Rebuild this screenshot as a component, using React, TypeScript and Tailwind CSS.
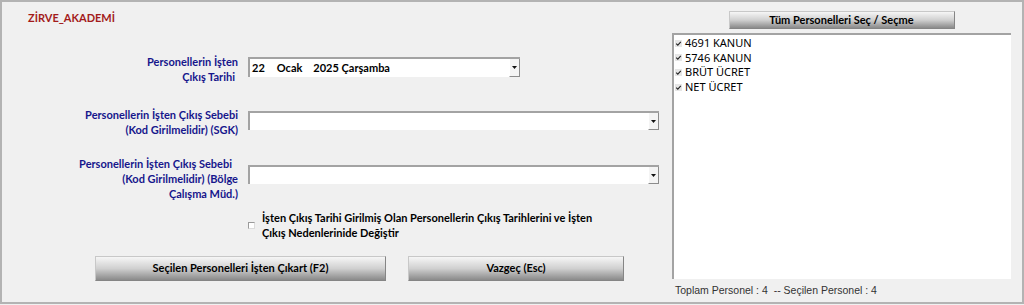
import React from 'react';

const labelFont = { fontFamily: 'Lato, "Noto Sans", sans-serif' };

const Combo = ({ width, height, children, className = '' }: { width: string; height: string; children?: React.ReactNode; className?: string }) => (
  <div className={`flex bg-white border-t-2 border-l-2 border-[#a3a3a3] ${width} ${height} ${className}`}>
    <div className="flex-1 flex items-center pl-[2px] text-[11px] font-bold text-black whitespace-pre" style={labelFont}>
      {children}
    </div>
    {/* dropdown arrow button */}
    <div className="w-[11px] h-full bg-[#f4f4f4] border-l border-white border-r border-r-[#8c8c8c] border-b border-b-[#8c8c8c] flex items-center justify-center">
      <svg width="5" height="3" viewBox="0 0 5 3">
        <path d="M0 0h5L2.5 3z" fill="#111" />
      </svg>
    </div>
  </div>
);

const GrayButton = ({ children, className = '' }: { children: React.ReactNode; className?: string }) => (
  <button
    className={`bg-linear-to-b from-[#f6f6f6] via-[#d0d0d0] to-[#8a8a8a] border border-[#858585] border-t-[#c8c8c8] border-l-[#c8c8c8] text-[11px] font-bold text-black flex items-center justify-center ${className}`}
    style={labelFont}
  >
    {children}
  </button>
);

const CheckMark = () => (
  <svg width="7" height="7" viewBox="0 0 7 7" className="shrink-0">
    <rect x="0" y="0" width="7" height="7" fill="#e6e6e6" />
    <path d="M1.2 3.6 L2.8 5.2 L5.8 1.8" stroke="#222" strokeWidth="1.1" fill="none" />
  </svg>
);

const items = ['4691 KANUN', '5746 KANUN', 'BRÜT ÜCRET', 'NET ÜCRET'];

export default function App() {
  return (
    <div className="w-[1024px] h-[305px] bg-[#f0f0f0] overflow-hidden">
      <div className="w-[1024px] h-[304px] border-2 border-[#b3b3b3] flex">
        {/* Left side - form */}
        <div className="w-[670px] flex flex-col" style={labelFont}>
          <div className="pl-[26px] pt-[8px] text-[11px] leading-[15px] font-bold text-[#a31b1b]">ZİRVE_AKADEMİ</div>

          {/* Row 1 */}
          <div className="flex items-start mt-[29px]">
            <div className="w-[236px] text-right text-[11px] leading-[15px] font-bold text-[#16168c]">
              Personellerin İşten
              <br />
              <span className="inline-block mr-[3px]">Çıkış Tarihi</span>
            </div>
            <Combo width="w-[272px]" height="h-[20px]" className="ml-[10px] mt-[3px]">
              <span>22</span>
              <span className="ml-[12px]">Ocak</span>
              <span className="ml-[11px]">2025 Çarşamba</span>
            </Combo>
          </div>

          {/* Row 2 */}
          <div className="flex items-start mt-[23px]">
            <div className="w-[236px] text-right text-[11px] leading-[15px] font-bold text-[#16168c]">
              Personellerin İşten Çıkış Sebebi
              <br />
              (Kod Girilmelidir) (SGK)
            </div>
            <Combo width="w-[411px]" height="h-[19px]" className="ml-[10px] mt-[4px]" />
          </div>

          {/* Row 3 */}
          <div className="flex items-start mt-[19px]">
            <div className="w-[236px] text-right text-[11px] leading-[15px] font-bold text-[#16168c]">
              <span className="inline-block mr-[6px]">Personellerin İşten Çıkış Sebebi</span>
              <br />
              (Kod Girilmelidir) (Bölge
              <br />
              Çalışma Müd.)
            </div>
            <Combo width="w-[411px]" height="h-[19px]" className="ml-[10px] mt-[9px]" />
          </div>

          {/* Checkbox row */}
          <div className="flex items-start mt-[9px] pl-[246px]">
            <div className="w-[7px] h-[7px] mt-[12px] bg-white border-t border-l border-[#9a9a9a] border-b border-r border-b-[#dcdcdc] border-r-[#dcdcdc] shrink-0" />
            <div className="ml-[7px] text-[11px] leading-[15px] font-bold text-black">
              İşten Çıkış Tarihi Girilmiş Olan Personellerin Çıkış Tarihlerini ve İşten
              <br />
              Çıkış Nedenlerinide Değiştir
            </div>
          </div>

          {/* Buttons */}
          <div className="flex mt-[16px] pl-[93px] gap-[22px]">
            <GrayButton className="w-[291px] h-[25px]">Seçilen Personelleri İşten Çıkart (F2)</GrayButton>
            <GrayButton className="w-[216px] h-[25px]">Vazgeç (Esc)</GrayButton>
          </div>
        </div>

        {/* Right side - personnel list */}
        <div className="w-[339px] flex flex-col">
          <GrayButton className="mx-auto mt-[9px] w-[226px] h-[18px]">Tüm Personelleri Seç / Seçme</GrayButton>
          <div className="mt-[4px] h-[246px] bg-white border-t-2 border-l-2 border-[#a3a3a3] pt-[1px] pl-[1px]">
            {items.map((item) => (
              <div key={item} className="flex items-center h-[14.6px] gap-[3px]">
                <CheckMark />
                <span className="text-[11px] text-black" style={{ fontFamily: '"Noto Sans", sans-serif' }}>
                  {item}
                </span>
              </div>
            ))}
          </div>
          <div
            className="mt-[4px] pl-[3px] text-[10.5px] leading-[14px] text-[#333] whitespace-pre"
            style={{ fontFamily: '"Liberation Sans", Arial, sans-serif' }}
          >
            Toplam Personel : 4  -- Seçilen Personel : 4
          </div>
        </div>
      </div>
    </div>
  );
}
